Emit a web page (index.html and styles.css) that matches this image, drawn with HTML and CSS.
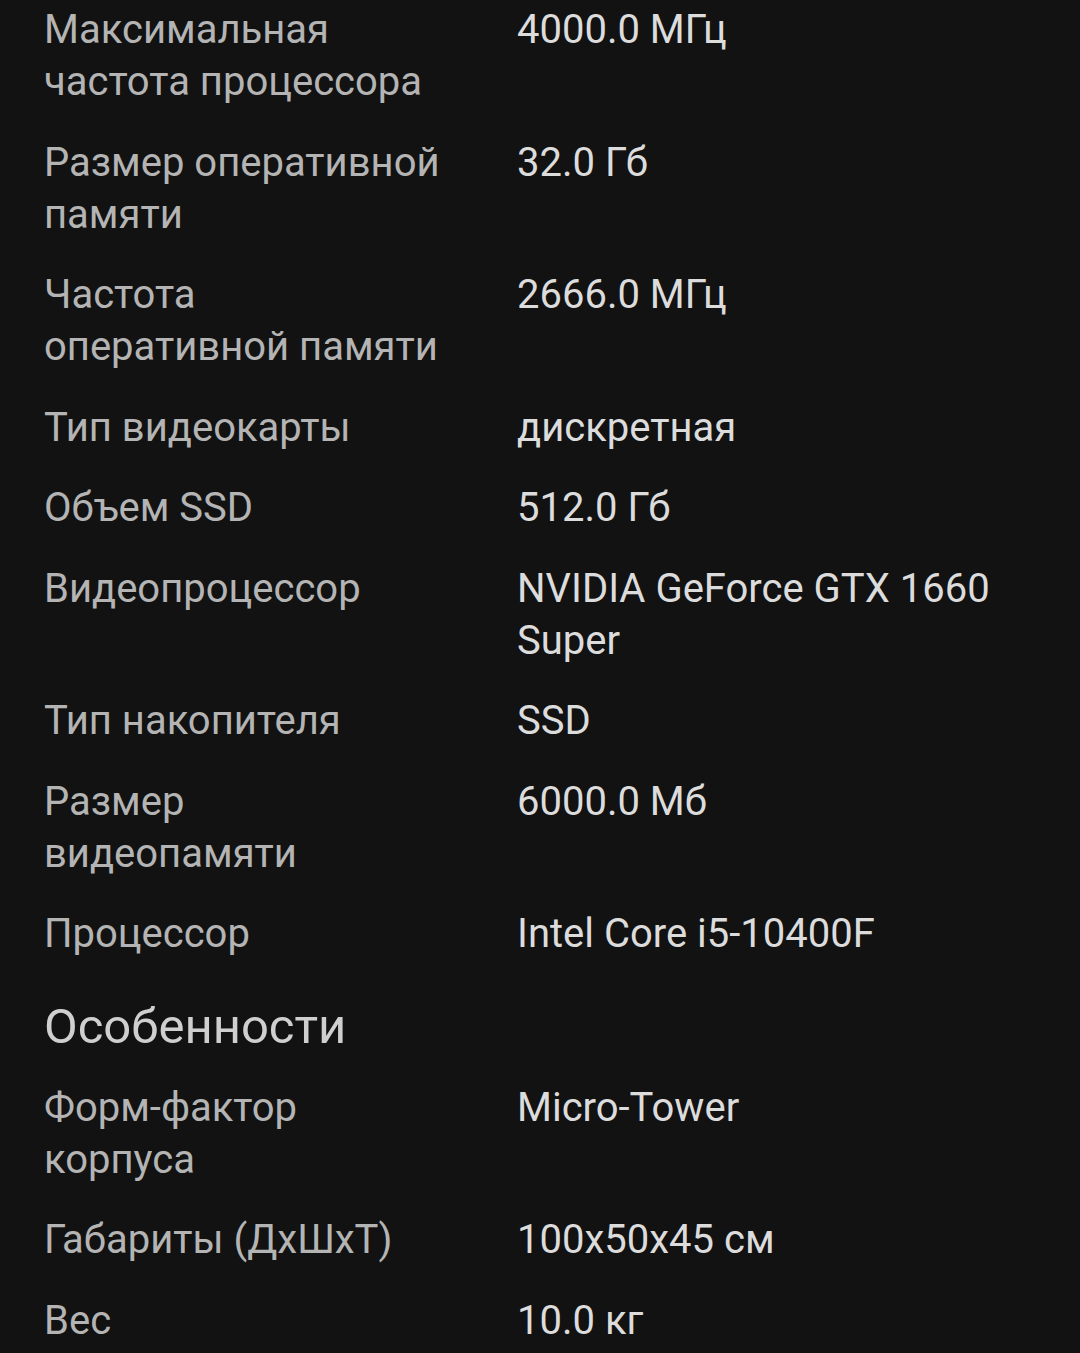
FILE: index.html
```html
<!DOCTYPE html>
<html lang="ru">
<head>
<meta charset="utf-8">
<title>Характеристики</title>
<link rel="stylesheet" href="styles.css">
</head>
<body>
<div class="specs">
  <div class="row"><div class="label">Максимальная частота процессора</div><div class="value">4000.0 МГц</div></div>
  <div class="row"><div class="label">Размер оперативной памяти</div><div class="value">32.0 Гб</div></div>
  <div class="row"><div class="label">Частота оперативной памяти</div><div class="value">2666.0 МГц</div></div>
  <div class="row"><div class="label">Тип видеокарты</div><div class="value">дискретная</div></div>
  <div class="row"><div class="label">Объем SSD</div><div class="value">512.0 Гб</div></div>
  <div class="row"><div class="label">Видеопроцессор</div><div class="value">NVIDIA GeForce GTX 1660 Super</div></div>
  <div class="row"><div class="label">Тип накопителя</div><div class="value">SSD</div></div>
  <div class="row"><div class="label">Размер видеопамяти</div><div class="value">6000.0 Мб</div></div>
  <div class="row"><div class="label">Процессор</div><div class="value">Intel Core i5-10400F</div></div>
  <h2 class="section">Особенности</h2>
  <div class="row"><div class="label">Форм-фактор корпуса</div><div class="value">Micro-Tower</div></div>
  <div class="row"><div class="label">Габариты (ДхШхТ)</div><div class="value">100x50x45 см</div></div>
  <div class="row"><div class="label">Вес</div><div class="value">10.0 кг</div></div>
</div>
</body>
</html>
```
FILE: styles.css
```css
html, body {
  margin: 0;
  padding: 0;
  background: #121212;
}
body {
  font-family: Roboto, "Noto Sans", sans-serif;
  font-size: 40px;
  line-height: 52px;
  width: 1080px;
  height: 1353px;
  overflow: hidden;
}
.specs {
  padding: 4px 44px 0 44px;
  display: flex;
  flex-direction: column;
}
.row {
  display: flex;
  padding-bottom: 28.5px;
}
.label {
  width: 399px;
  margin-right: 74px;
  flex: none;
  color: #b4b4b4;
}
.value {
  flex: 1;
  color: #dcdcdc;
}
.section {
  margin: 0;
  padding: 8px 0 25px 0;
  font-size: 49px;
  line-height: 60px;
  font-weight: 400;
  color: #cfcfcf;
}
```
